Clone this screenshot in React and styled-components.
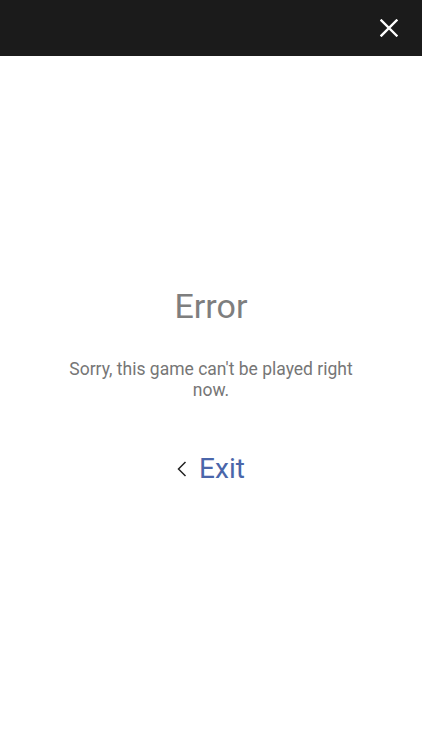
import React from 'react';
import styled, { createGlobalStyle } from 'styled-components';

const Global = createGlobalStyle`
  html, body {
    margin: 0;
    padding: 0;
    background: #fff;
    font-family: Roboto, "Noto Sans", sans-serif;
  }
`;

const Page = styled.div`
  width: 422px;
  height: 750px;
  display: flex;
  flex-direction: column;
  background: #fff;
`;

const TopBar = styled.div`
  height: 56px;
  flex-shrink: 0;
  background: #1b1b1b;
  display: flex;
  align-items: center;
  justify-content: flex-end;
  padding: 0 19px;
`;

const CloseButton = styled.button`
  width: 28px;
  height: 28px;
  padding: 0;
  border: none;
  background: none;
  display: flex;
  align-items: center;
  justify-content: center;
  cursor: pointer;
`;

const Body = styled.div`
  display: flex;
  flex-direction: column;
  align-items: center;
  padding: 230px 60px 0;
  text-align: center;
`;

const Title = styled.div`
  font-size: 34px;
  line-height: 40px;
  color: #7e7e7e;
`;

const Message = styled.div`
  margin-top: 33px;
  font-size: 17.5px;
  line-height: 21px;
  color: #767676;
`;

const ExitLink = styled.a`
  margin-top: 52px;
  display: flex;
  align-items: center;
  gap: 12px;
  font-size: 28px;
  line-height: 32px;
  color: #4a66aa;
  text-decoration: none;
`;

const App = () => {
  return (
    <Page>
      <Global />
      <TopBar>
        <CloseButton aria-label="Close">
          <svg width="18" height="18" viewBox="0 0 18 18">
            <path d="M1.5 1.5 L16.5 16.5 M16.5 1.5 L1.5 16.5" stroke="#fff" strokeWidth="2.4" strokeLinecap="square" />
          </svg>
        </CloseButton>
      </TopBar>
      <Body>
        <Title>Error</Title>
        <Message>Sorry, this game can't be played right now.</Message>
        <ExitLink href="#">
          <svg width="10" height="16" viewBox="0 0 10 16">
            <path d="M8.5 1 L1.5 8 L8.5 15" fill="none" stroke="#222" strokeWidth="1.5" />
          </svg>
          Exit
        </ExitLink>
      </Body>
    </Page>
  );
};

export default App;
